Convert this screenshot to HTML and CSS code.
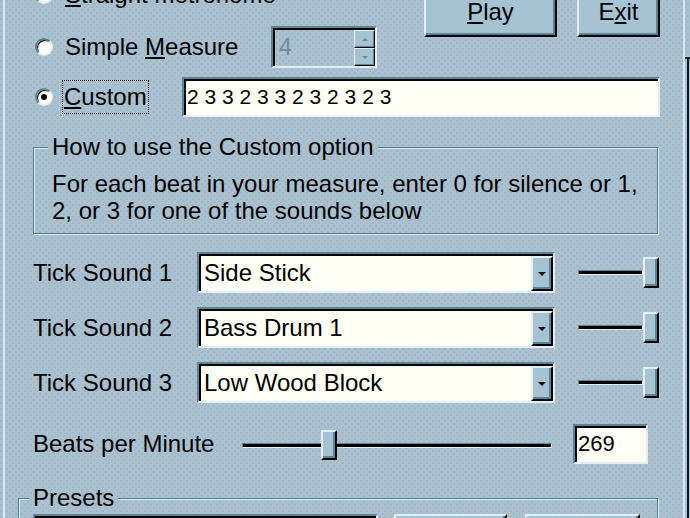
FILE: index.html
```html
<!DOCTYPE html>
<html lang="en">
<head>
    <meta charset="UTF-8">
    <title>Metronome</title>
    <link rel="stylesheet" href="styles.css">
</head>
<body>
    <div class="dialog">
        <!-- mode choice + main buttons -->
        <div class="row row-top">
            <div class="option"><span class="radio"></span><span><u>S</u>traight metronome</span></div>
            <div class="top-buttons">
                <div class="btn raised btn-play"><span><u>P</u>lay</span></div>
                <div class="btn raised btn-exit"><span>E<u>x</u>it</span></div>
            </div>
        </div>
        <div class="row row-simple">
            <div class="option"><span class="radio"></span><span>Simple <u>M</u>easure</span></div>
            <div class="spinner sunken">
                <span class="spin-value">4</span>
                <div class="spin-btns">
                    <span class="spin-btn raised"><i class="arrow-up"></i></span>
                    <span class="spin-btn raised"><i class="arrow-down"></i></span>
                </div>
            </div>
        </div>
        <div class="row row-custom">
            <div class="option"><span class="radio checked"></span><span class="focus"><u>C</u>ustom</span></div>
            <div class="field sunken custom-field">2 3 3 2 3 3 2 3 2 3 2 3</div>
        </div>

        <fieldset class="group help">
            <legend>How to use the Custom option</legend>
            <p>For each beat in your measure, enter 0 for silence or 1,<br>2, or 3 for one of the sounds below</p>
        </fieldset>

        <!-- sound pickers -->
        <div class="sounds">
            <div class="sound-row">
                <span class="label">Tick Sound 1</span>
                <div class="combo sunken"><span class="value">Side Stick</span><span class="drop raised"></span></div>
                <div class="slider-small"><span class="track"></span><span class="thumb raised"></span></div>
            </div>
            <div class="sound-row">
                <span class="label">Tick Sound 2</span>
                <div class="combo sunken"><span class="value">Bass Drum 1</span><span class="drop raised"></span></div>
                <div class="slider-small"><span class="track"></span><span class="thumb raised"></span></div>
            </div>
            <div class="sound-row">
                <span class="label">Tick Sound 3</span>
                <div class="combo sunken"><span class="value">Low Wood Block</span><span class="drop raised"></span></div>
                <div class="slider-small"><span class="track"></span><span class="thumb raised"></span></div>
            </div>
        </div>

        <div class="bpm-row">
            <span class="label">Beats per Minute</span>
            <div class="slider-big"><span class="track"></span><span class="thumb raised" style="left: 79px;"></span></div>
            <div class="field sunken bpm-field">269</div>
        </div>

        <fieldset class="group presets">
            <legend>Presets</legend>
            <div class="preset-row">
                <div class="combo sunken preset-combo"><span class="value"></span><span class="drop raised"></span></div>
                <div class="btn raised preset-btn-a"></div>
                <div class="btn raised preset-btn-b"></div>
            </div>
        </fieldset>
    </div>
</body>
</html>
```

FILE: styles.css
```css
* {
    box-sizing: border-box;
}

html, body {
    margin: 0;
}

body {
    width: 690px;
    height: 518px;
    overflow: hidden;
    font-family: "Liberation Sans", Arial, sans-serif;
    font-size: 24px;
    color: #000;
    background-color: #a5c3d3;
    background-image:
        linear-gradient(#0e1a20, #0e1a20),
        linear-gradient(#0e1a20, #0e1a20),
        radial-gradient(circle at 1px 1px, #b7aab5 0.6px, transparent 1px),
        radial-gradient(circle at 4px 4px, #b7aab5 0.6px, transparent 1px);
    background-size: 2px 100%, 6px 2px, 6px 6px, 6px 6px;
    background-position: 687px 58px, 684px 57px, 0 0, 0 0;
    background-repeat: no-repeat, no-repeat, repeat, repeat;
}

.dialog {
    width: 682px;
    height: 518px;
    margin-left: 3px;
    padding-left: 28px;
    border-left: 2px solid #d8eaf2;
    border-right: 2px solid #d8eaf2;
}

/* 3d edges */
.raised {
    background-color: #a5c3d3;
    border: 2px solid;
    border-color: #e2f0f6 #000 #000 #e2f0f6;
    box-shadow: inset -2px -2px 0 #5a8494;
}

.sunken {
    border: 2px solid;
    border-color: #5a8494 #e2f0f6 #e2f0f6 #5a8494;
    box-shadow: inset 2px 2px 0 #000;
}

.row {
    display: flex;
    align-items: center;
}

.option {
    display: flex;
    align-items: center;
    gap: 12px;
    line-height: 28px;
    white-space: nowrap;
}

.radio {
    width: 18px;
    height: 18px;
    margin-left: 2px;
    border-radius: 50%;
    background: #fffff6;
    border: 2px solid;
    border-color: #5a8494 #e2f0f6 #e2f0f6 #5a8494;
    box-shadow: inset 1px 1px 0 #000;
    display: flex;
    align-items: center;
    justify-content: center;
    flex: none;
}

.radio.checked::after {
    content: "";
    width: 6px;
    height: 6px;
    border-radius: 50%;
    background: #000;
}

.row-top {
    height: 26px;
    align-items: flex-start;
}

.row-top .option {
    width: 391px;
    height: 28px;
    margin-top: -19px;
}

.top-buttons {
    display: flex;
    gap: 20px;
    margin-top: -10px;
}

.btn {
    height: 47px;
    display: flex;
    align-items: center;
    justify-content: center;
    padding-bottom: 4px;
}

.btn-play {
    width: 133px;
}

.btn-exit {
    width: 83px;
}

.row-simple {
    height: 42px;
}

.row-simple .option {
    width: 238px;
}

.spinner {
    width: 106px;
    height: 42px;
    display: flex;
    align-items: center;
    justify-content: space-between;
    padding: 0 0 0 6px;
    font-size: 23px;
    color: #6c8d9e;
}

.spin-btns {
    display: flex;
    flex-direction: column;
    align-self: stretch;
    justify-content: center;
    padding-top: 2px;
}

.spin-btn {
    width: 21px;
    height: 18px;
    display: flex;
    align-items: center;
    justify-content: center;
    border-width: 1px;
    box-shadow: inset -1px -1px 0 #5a8494;
}

.arrow-up,
.arrow-down {
    width: 0;
    height: 0;
    border-left: 3px solid transparent;
    border-right: 3px solid transparent;
}

.arrow-up {
    border-bottom: 3px solid #6c8d9e;
}

.arrow-down {
    border-top: 3px solid #6c8d9e;
}

.row-custom {
    height: 40px;
    margin-top: 9px;
}

.row-custom .option {
    width: 149px;
    gap: 9px;
}

.focus {
    border: 1px dotted #000;
    padding: 2px 1px;
}

.field {
    background: #fffff6;
    display: flex;
    align-items: center;
}

.custom-field {
    width: 478px;
    height: 40px;
    padding-left: 3px;
    font-size: 21px;
}

/* group boxes */
.group {
    margin: 16px 0 0;
    padding: 0 0 9px 18px;
    border: 1px solid #52808f;
    box-shadow: 1px 1px 0 #dcecf3, inset 1px 1px 0 #dcecf3;
    min-width: 0;
}

.group legend {
    padding: 0 4px;
    margin-left: -4px;
    line-height: 28px;
    background-color: #a5c3d3;
    background-image:
        radial-gradient(circle at 1px 1px, #b7aab5 0.6px, transparent 1px),
        radial-gradient(circle at 4px 4px, #b7aab5 0.6px, transparent 1px);
    background-size: 6px 6px;
    background-attachment: fixed;
}

.help {
    width: 625px;
}

.help p {
    margin: 9px 0 0;
    line-height: 27px;
    white-space: nowrap;
}

.sounds {
    display: flex;
    flex-direction: column;
    gap: 14px;
    margin-top: 18px;
}

.sound-row {
    display: flex;
    align-items: center;
    height: 41px;
}

.label {
    white-space: nowrap;
}

.sound-row .label {
    width: 164px;
}

.combo {
    width: 358px;
    height: 41px;
    display: flex;
    align-items: center;
    background: #fffff6;
    padding-left: 5px;
}

.combo .value {
    flex: 1;
    white-space: nowrap;
}

.drop {
    width: 22px;
    height: 35px;
    margin-top: 2px;
    display: flex;
    align-items: center;
    justify-content: center;
}

.drop::after {
    content: "";
    border-left: 4px solid transparent;
    border-right: 4px solid transparent;
    border-top: 4px solid #000;
}

.slider-small {
    width: 81px;
    height: 31px;
    margin-left: 23px;
    display: flex;
    align-items: center;
}

.track {
    flex: 1;
    height: 5px;
    background: #000;
    border: 1px solid;
    border-color: #5a8494 #e2f0f6 #e2f0f6 #5a8494;
}

.thumb {
    width: 16px;
    height: 31px;
    flex: none;
}

.bpm-row {
    display: flex;
    align-items: center;
    height: 40px;
    margin-top: 21px;
}

.bpm-row .label {
    width: 209px;
}

.slider-big {
    position: relative;
    width: 310px;
    height: 31px;
    display: flex;
    align-items: center;
    margin-top: 3px;
}

.slider-big .thumb {
    position: absolute;
    top: 0;
    height: 30px;
}

.bpm-field {
    width: 75px;
    height: 40px;
    margin-left: 21px;
    padding-left: 3px;
    font-size: 22px;
}

.presets {
    width: 640px;
    margin: 20px 0 0 -15px;
    padding: 0 0 0 14px;
}

.preset-row {
    display: flex;
    margin-top: 2px;
}

.preset-combo {
    width: 345px;
}

.preset-btn-a {
    width: 113px;
    height: 41px;
    margin-left: 16px;
}

.preset-btn-b {
    width: 115px;
    height: 41px;
    margin-left: 18px;
}
```
